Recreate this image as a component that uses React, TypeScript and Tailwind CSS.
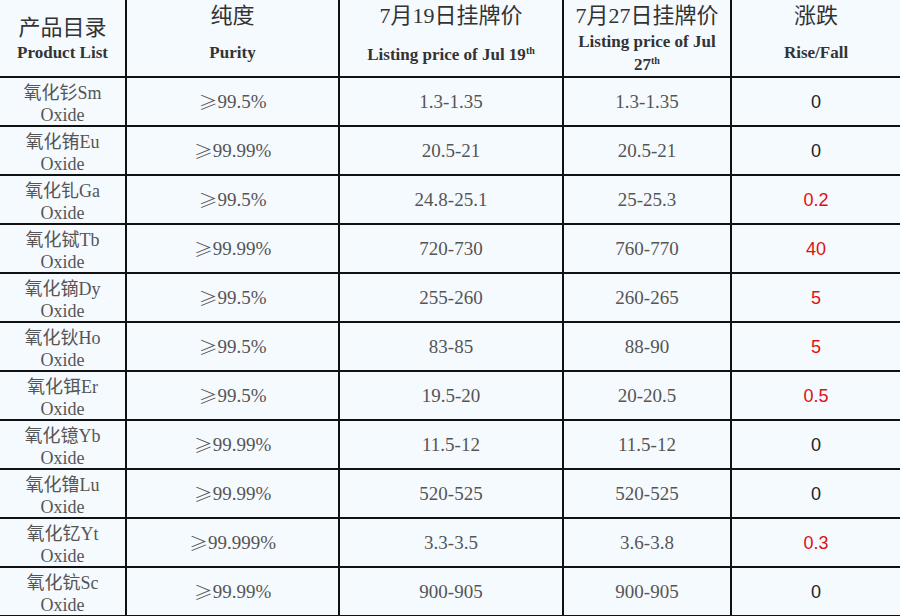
import React from "react";

const rows = [
  { cn: "氧化钐", el: "Sm", purity: "99.5%", p19: "1.3-1.35", p27: "1.3-1.35", diff: "0" },
  { cn: "氧化铕", el: "Eu", purity: "99.99%", p19: "20.5-21", p27: "20.5-21", diff: "0" },
  { cn: "氧化钆", el: "Ga", purity: "99.5%", p19: "24.8-25.1", p27: "25-25.3", diff: "0.2" },
  { cn: "氧化铽", el: "Tb", purity: "99.99%", p19: "720-730", p27: "760-770", diff: "40" },
  { cn: "氧化镝", el: "Dy", purity: "99.5%", p19: "255-260", p27: "260-265", diff: "5" },
  { cn: "氧化钬", el: "Ho", purity: "99.5%", p19: "83-85", p27: "88-90", diff: "5" },
  { cn: "氧化铒", el: "Er", purity: "99.5%", p19: "19.5-20", p27: "20-20.5", diff: "0.5" },
  { cn: "氧化镱", el: "Yb", purity: "99.99%", p19: "11.5-12", p27: "11.5-12", diff: "0" },
  { cn: "氧化镥", el: "Lu", purity: "99.99%", p19: "520-525", p27: "520-525", diff: "0" },
  { cn: "氧化钇", el: "Yt", purity: "99.999%", p19: "3.3-3.5", p27: "3.6-3.8", diff: "0.3" },
  { cn: "氧化钪", el: "Sc", purity: "99.99%", p19: "900-905", p27: "900-905", diff: "0" },
];

const serif = "font-['Liberation_Serif','Noto_Sans_CJK_SC',serif]";

export default function App() {
  return (
    <div className={`w-[900px] h-[616px] overflow-hidden bg-[#f5faff] ${serif}`}>
      {/* header */}
      <div className="flex h-[78px] border-b-2 border-[#111] text-[#333]">
        <div className="w-[127px] shrink-0 border-r-2 border-[#111] flex flex-col items-center pt-[15px]">
          <div className="text-[22px] leading-[26px]">产品目录</div>
          <div className="mt-[1px] text-[17px] leading-[22px] font-bold">Product List</div>
        </div>
        <div className="w-[213px] shrink-0 border-r-2 border-[#111] flex flex-col items-center pt-[3px]">
          <div className="text-[22px] leading-[26px]">纯度</div>
          <div className="mt-[13px] text-[17px] leading-[22px] font-bold">Purity</div>
        </div>
        <div className="w-[224px] shrink-0 border-r-2 border-[#111] flex flex-col items-center pt-[3px]">
          <div className="text-[22px] leading-[26px]">7月19日挂牌价</div>
          <div className="mt-[15px] text-[17px] leading-[22px] font-bold">
            Listing price of Jul 19<span className="text-[10px] leading-none align-[6px]">th</span>
          </div>
        </div>
        <div className="w-[168px] shrink-0 border-r-2 border-[#111] flex flex-col items-center pt-[3px]">
          <div className="text-[22px] leading-[26px]">7月27日挂牌价</div>
          <div className="mt-[1px] text-[17px] leading-[23px] font-bold text-center">
            <div>Listing price of Jul</div>
            <div>
              27<span className="text-[10px] leading-none align-[6px]">th</span>
            </div>
          </div>
        </div>
        <div className="flex-1 flex flex-col items-center pt-[3px]">
          <div className="text-[22px] leading-[26px]">涨跌</div>
          <div className="mt-[13px] text-[17px] leading-[22px] font-bold">Rise/Fall</div>
        </div>
      </div>

      {/* body */}
      {rows.map((r) => (
        <div key={r.el} className="flex h-[49px] border-b-2 border-[#111] text-[#555]">
          <div className="w-[127px] shrink-0 border-r-2 border-[#111] flex flex-col items-center justify-center text-[18px] leading-[22px] pt-[4px]">
            <div>
              {r.cn}
              {r.el}
            </div>
            <div>Oxide</div>
          </div>
          <div className="w-[213px] shrink-0 border-r-2 border-[#111] flex items-center justify-center text-[19px] pt-[2px]">
            <span className="font-['Noto_Sans_CJK_SC',sans-serif] font-light">≥</span>
            {r.purity}
          </div>
          <div className="w-[224px] shrink-0 border-r-2 border-[#111] flex items-center justify-center text-[19px] pt-[2px]">
            {r.p19}
          </div>
          <div className="w-[168px] shrink-0 border-r-2 border-[#111] flex items-center justify-center text-[19px] pt-[2px]">
            {r.p27}
          </div>
          <div
            className={`flex-1 flex items-center justify-center text-[18px] pt-[2px] font-['Liberation_Sans',sans-serif] ${
              r.diff === "0" ? "text-[#222]" : "text-[#e01010]"
            }`}
          >
            {r.diff}
          </div>
        </div>
      ))}
    </div>
  );
}
